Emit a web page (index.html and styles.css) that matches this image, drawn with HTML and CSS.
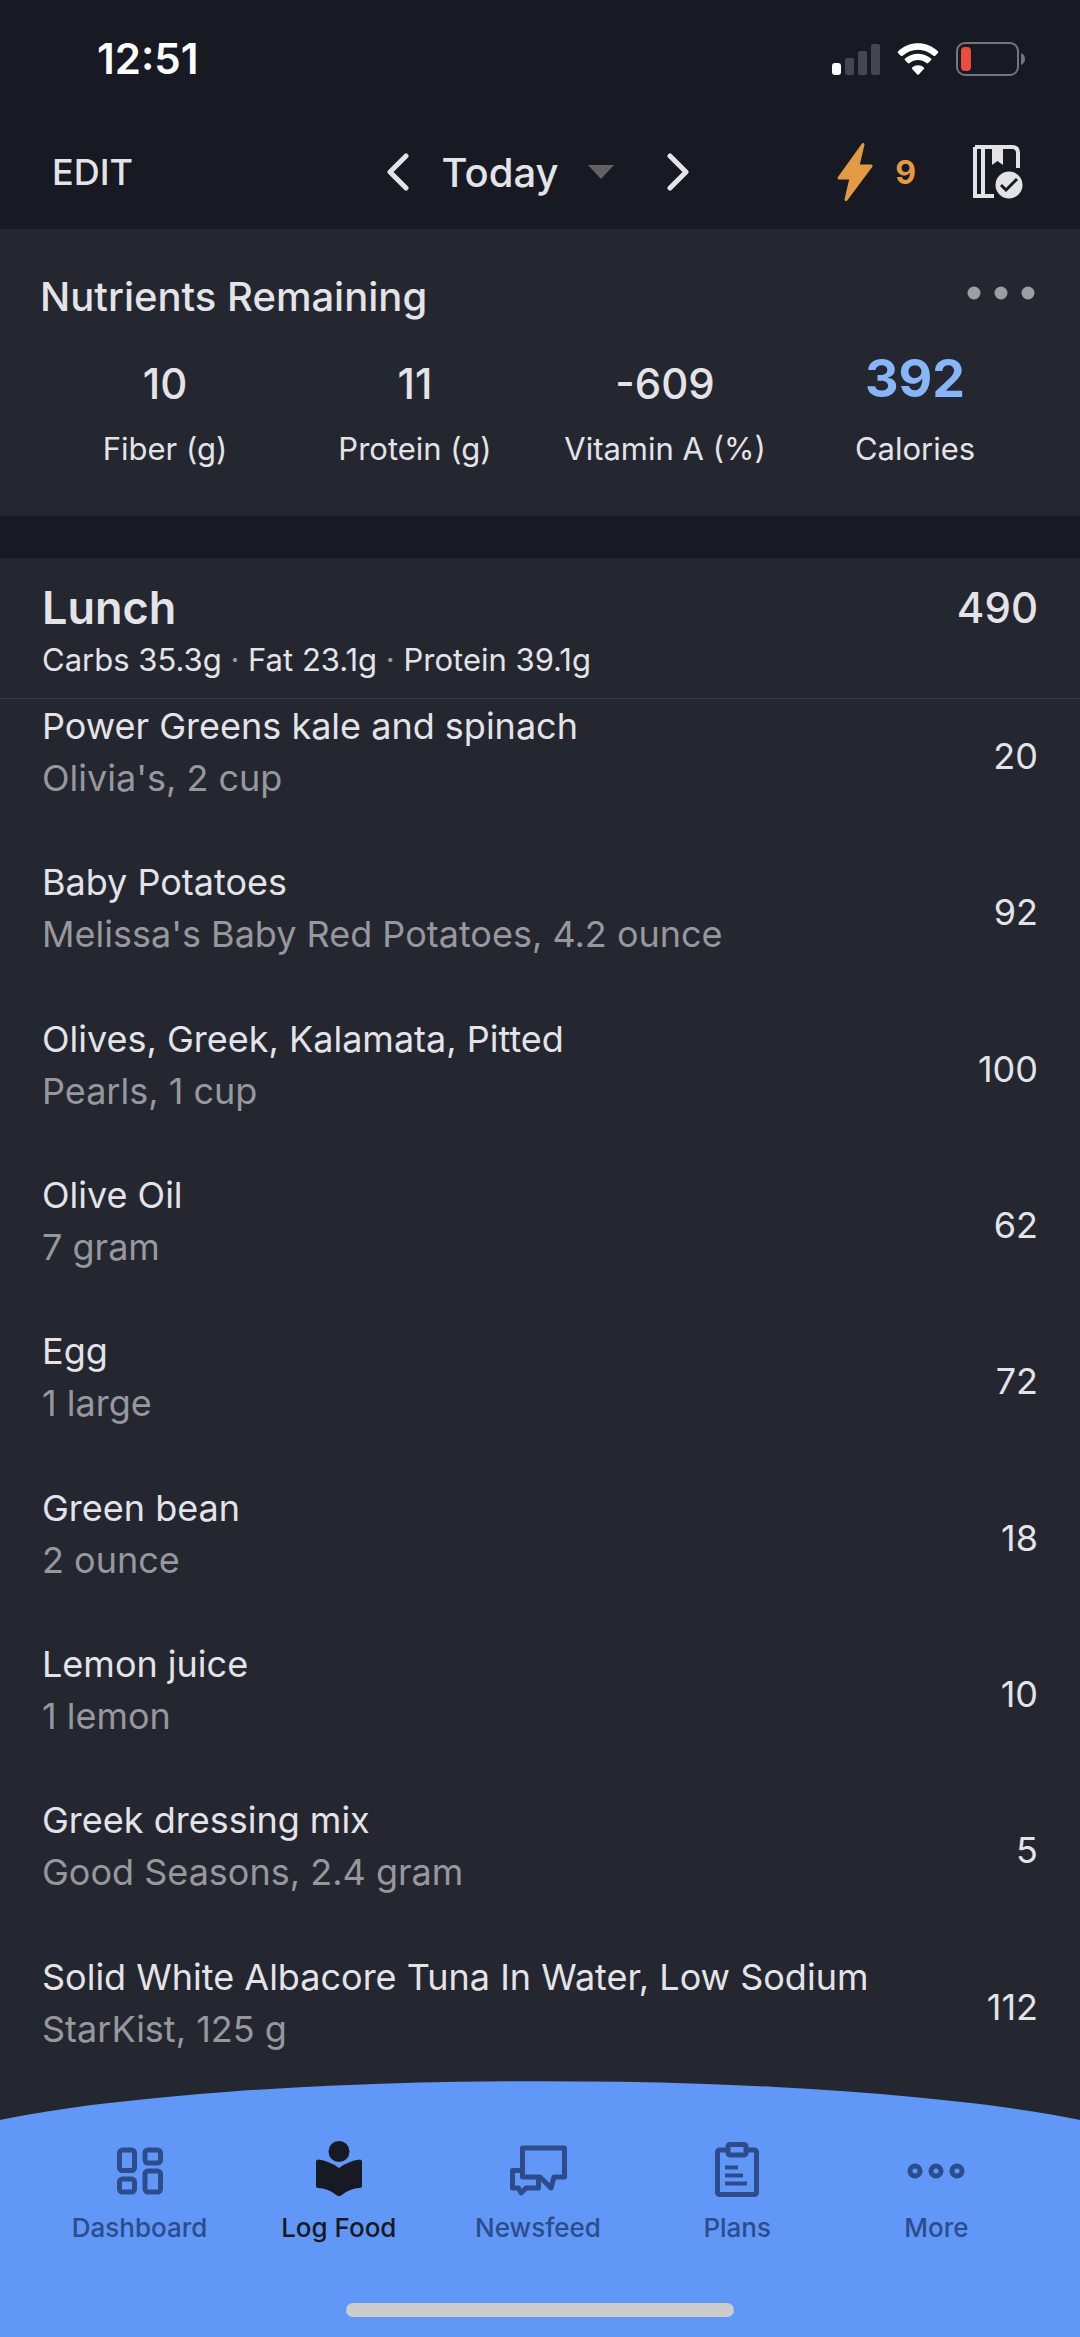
FILE: index.html
```html
<!DOCTYPE html>
<html lang="en">
<head>
<meta charset="utf-8">
<meta name="viewport" content="width=device-width, initial-scale=1">
<title>Food Log</title>
<link rel="stylesheet" href="styles.css">
</head>
<body>
<div class="status">
  <time class="clock">12:51</time>
  <div class="status-icons">
    <svg width="48" height="32" viewBox="0 0 48 32" aria-hidden="true"><rect y="20" width="9" height="12" rx="3" fill="#fff"/><g fill="#454651"><rect x="13" y="15" width="9" height="17" rx="2"/><rect x="26" y="8" width="9" height="24" rx="2"/><rect x="39" y="1" width="9" height="31" rx="2"/></g></svg>
    <svg width="42" height="32" viewBox="0 0 42 32" aria-hidden="true" fill="#fff"><path d="M1.2 8.2C12.5-2.4 29.500-2.4 40.800 8.200Q41.800 9.200 40.800 10.200L38.200 12.700Q37.400 13.500 36.400 12.700C27.500 4.700 14.500 4.700 5.600 12.700Q4.600 13.500 3.800 12.700L1.200 10.200Q.200 9.200 1.200 8.200Z"/><path d="M8 15.500C15.500 9 26.500 9 34 15.500Q34.800 16.500 34 17.300L31.200 20Q30.400 20.800 29.400 20C24.500 16 17.500 16 12.600 20Q11.600 20.800 10.800 20L8 17.300Q7.200 16.500 8 15.500Z"/><path d="M15.200 24.500C18.500 21.600 23.500 21.600 26.800 24.500Q27.500 25.300 26.800 26.100L22 31.200Q21 32.200 20 31.200L15.200 26.100Q14.500 25.300 15.200 24.500Z"/></svg>
    <svg width="70" height="34" viewBox="0 0 70 34" aria-hidden="true"><rect x="1" y="1" width="61" height="32" rx="8" fill="none" stroke="#747580" stroke-width="2"/><rect x="5" y="5" width="10" height="24" rx="4" fill="#eb4d3d"/><path d="M65 11Q69 13 69 17T65 23Z" fill="#747580"/></svg>
  </div>
</div>
<header class="topbar">
  <button class="edit" type="button">EDIT</button>
  <div class="day">
    <button type="button" aria-label="Previous day"><svg width="22" height="38" viewBox="0 0 22 38"><path d="M19 3L3 19L19 35"/></svg></button>
    <button class="today" type="button">Today <svg width="26" height="14" viewBox="0 0 26 14" aria-hidden="true"><path d="M0 0H26L13 14Z"/></svg></button>
    <button type="button" aria-label="Next day"><svg width="22" height="38" viewBox="0 0 22 38"><path d="M3 3L19 19L3 35"/></svg></button>
  </div>
  <div class="tools">
    <button class="streak" type="button"><svg width="36" height="60" viewBox="0 0 36 60" aria-hidden="true"><path d="M26 2.500L2 36H14L9 57.500L34 24H21Z"/></svg>9</button>
    <button type="button" aria-label="Complete diary"><svg width="52" height="56" viewBox="0 0 52 56"><path d="M3 3V52H22M3 3H40Q46 3 46 9V24M11 3V52" fill="none" stroke="#e3e3e6" stroke-width="4"/><path d="M20 3H31V21L25.500 17L20 21Z" fill="#e3e3e6"/><circle cx="37" cy="41" r="16" fill="#171923"/><circle cx="37" cy="41" r="13.500" fill="#e3e3e6"/><path d="M29 41L34 46L45 35" fill="none" stroke="#171923" stroke-width="3"/></svg></button>
  </div>
</header>
<section class="summary">
  <div class="summary-head">
    <h1>Nutrients Remaining</h1>
    <button type="button" aria-label="Options"><svg width="68" height="14" viewBox="0 0 68 14" fill="#9d9ea2"><circle cx="7" cy="7" r="6.500"/><circle cx="34" cy="7" r="6.500"/><circle cx="61" cy="7" r="6.500"/></svg></button>
  </div>
  <dl class="nutrients">
    <div><dt>Fiber (g)</dt><dd>10</dd></div>
    <div><dt>Protein (g)</dt><dd>11</dd></div>
    <div><dt>Vitamin A (%)</dt><dd>-609</dd></div>
    <div><dt>Calories</dt><dd class="calories">392</dd></div>
  </dl>
</section>
<main class="meal">
  <div class="meal-head">
    <div class="meal-title"><h2>Lunch</h2><span>490</span></div>
    <p>Carbs 35.3g <i>·</i> Fat 23.1g <i>·</i> Protein 39.1g</p>
  </div>
  <ul class="foods">
    <li><div><h3>Power Greens kale and spinach</h3><p>Olivia's, 2 cup</p></div><span>20</span></li>
    <li><div><h3>Baby Potatoes</h3><p>Melissa's Baby Red Potatoes, 4.2 ounce</p></div><span>92</span></li>
    <li><div><h3>Olives, Greek, Kalamata, Pitted</h3><p>Pearls, 1 cup</p></div><span>100</span></li>
    <li><div><h3>Olive Oil</h3><p>7 gram</p></div><span>62</span></li>
    <li><div><h3>Egg</h3><p>1 large</p></div><span>72</span></li>
    <li><div><h3>Green bean</h3><p>2 ounce</p></div><span>18</span></li>
    <li><div><h3>Lemon juice</h3><p>1 lemon</p></div><span>10</span></li>
    <li><div><h3>Greek dressing mix</h3><p>Good Seasons, 2.4 gram</p></div><span>5</span></li>
    <li><div><h3>Solid White Albacore Tuna In Water, Low Sodium</h3><p>StarKist, 125 g</p></div><span>112</span></li>
  </ul>
</main>
<footer class="dock">
  <svg class="arc" viewBox="0 0 1080 40" preserveAspectRatio="none" aria-hidden="true"><path d="M0 40A640 86 0 0 1 1080 40Z"/></svg>
  <nav class="tabs">
    <a href="#dashboard"><svg width="60" height="60" viewBox="0 0 60 60" aria-hidden="true"><g fill="none" stroke="currentColor" stroke-width="5"><rect x="9.500" y="10" width="15" height="20.500" rx="3"/><rect x="35" y="10" width="15.500" height="13" rx="3"/><rect x="9.500" y="39" width="15" height="13" rx="3"/><rect x="35" y="31" width="15.500" height="21" rx="3"/></g></svg>Dashboard</a>
    <a href="#log" class="active" aria-current="page"><svg width="60" height="60" viewBox="0 0 60 60" aria-hidden="true" fill="currentColor"><circle cx="30" cy="11.500" r="10.500"/><path d="M7 22Q7 19.500 9 19.500Q21 21 30 28Q39 21 51 19.500Q53 19.500 53 22V46Q53 48 51 48Q41 48 32 55.500Q30 57 28 55.500Q19 48 9 48Q7 48 7 46Z"/></svg>Log Food</a>
    <a href="#news"><svg width="60" height="60" viewBox="0 0 60 60" aria-hidden="true"><g fill="none" stroke="currentColor" stroke-width="5" stroke-linejoin="round"><path d="M14.500 8H56.500V37H46L43 48L32 37H14.500Z"/><path d="M14.500 30.500H4.500V48H10.500L13 53L18 48H30.500V38"/></g></svg>Newsfeed</a>
    <a href="#plans"><svg width="60" height="60" viewBox="0 0 60 60" aria-hidden="true"><g fill="none" stroke="currentColor" stroke-width="5"><rect x="10.500" y="10" width="39" height="44.500" rx="2"/><path d="M18 27.500H31M18 35.500H36M18 43.500H40" stroke-width="4"/><rect x="21" y="4.500" width="18" height="10.500" rx="2" fill="#6198f8"/></g></svg>Plans</a>
    <a href="#more"><svg width="60" height="60" viewBox="0 0 60 60" aria-hidden="true"><g fill="none" stroke="currentColor" stroke-width="5"><circle cx="9" cy="31" r="5"/><circle cx="30" cy="31" r="5"/><circle cx="51" cy="31" r="5"/></g></svg>More</a>
  </nav>
  <div class="home"></div>
</footer>
</body>
</html>
```
FILE: styles.css
```css
* { box-sizing: border-box; margin: 0; padding: 0; }

body {
  min-height: 100vh;
  display: flex;
  flex-direction: column;
  background: #171923;
  color: #e3e3e8;
  font-family: Inter, "Liberation Sans", sans-serif;
  font-size: 36px;
}

svg { display: block; }
button { border: 0; background: none; color: inherit; font: inherit; cursor: pointer; }

.status {
  display: flex;
  justify-content: space-between;
  align-items: center;
  height: 117px;
  padding: 0 54px 0 97px;
}
.clock { color: #fff; font-size: 42px; font-weight: 600; }
.status-icons { display: flex; align-items: center; gap: 17px; }

.topbar {
  display: grid;
  grid-template-columns: 1fr auto 1fr;
  align-items: center;
  height: 112px;
  padding: 0 56px 2px 52px;
}
.edit { justify-self: start; font-weight: 500; }
.day { display: flex; align-items: center; gap: 33px; }
.day path { fill: none; stroke: #e3e3e8; stroke-width: 5; stroke-linecap: round; stroke-linejoin: round; }
.today { display: flex; align-items: center; gap: 30px; margin-right: 20px; font-size: 40px; font-weight: 500; }
.today path { fill: #626262; stroke: none; }
.tools { display: flex; justify-self: end; align-items: center; gap: 56px; }
.streak { display: flex; align-items: center; gap: 22px; color: #e39a45; font-size: 32px; font-weight: 700; }
.streak path { fill: #e39a45; stroke: #e39a45; stroke-width: 3; stroke-linejoin: round; }

.summary { height: 287px; padding: 32px 40px 0; background: #252730; }
.summary-head { display: flex; justify-content: space-between; align-items: center; height: 70px; margin-bottom: 8px; padding-right: 5px; }
.summary-head button { padding-bottom: 6px; }
h1 { font-size: 40px; font-weight: 500; }
.nutrients { display: grid; grid-template-columns: repeat(4, 1fr); }
.nutrients div { display: flex; flex-direction: column-reverse; text-align: center; }
dt { font-size: 31px; line-height: 60px; }
dd { font-size: 42px; font-weight: 500; line-height: 70px; }
dd.calories { font-size: 52px; font-weight: 700; line-height: 80px; color: #86b5f8; }

.meal { flex: 1; display: flex; flex-direction: column; margin-top: 42px; background: #252730; }
.meal-head { height: 141px; padding: 20px 42px 0; border-bottom: 1px solid #3a3b44; }
.meal-title { display: flex; justify-content: space-between; align-items: center; line-height: 60px; }
.meal-title span { font-size: 42px; font-weight: 500; }
h2 { font-size: 45px; font-weight: 600; }
.meal-head p { font-size: 31px; line-height: 44px; }
.meal-head i { color: #9d9ea2; font-style: normal; }

/* The list is scrolled slightly beneath the meal heading. */
.foods { flex: 1; display: grid; grid-auto-rows: 1fr; margin-top: -25px; list-style: none; }
.foods li { display: flex; justify-content: space-between; align-items: center; padding: 0 42px; line-height: 52px; }
.foods span { padding-top: 8px; }
h3 { font-size: 36px; font-weight: 400; }
.foods p { color: #97989e; }

.dock { background: #6198f8; color: #2c4c8c; }
.arc { width: 100%; height: 39px; background: #252730; fill: #6198f8; }
.tabs { display: grid; grid-template-columns: repeat(5, 1fr); padding: 20px 44px 0 40px; }
.tabs a { display: flex; flex-direction: column; align-items: center; gap: 8px; color: inherit; font-size: 26px; font-weight: 500; line-height: 40px; text-decoration: none; }
.tabs a.active { color: #171923; }
.home { width: 36%; height: 14px; margin: 55px auto 20px; border-radius: 7px; background: #ccc; }
```
